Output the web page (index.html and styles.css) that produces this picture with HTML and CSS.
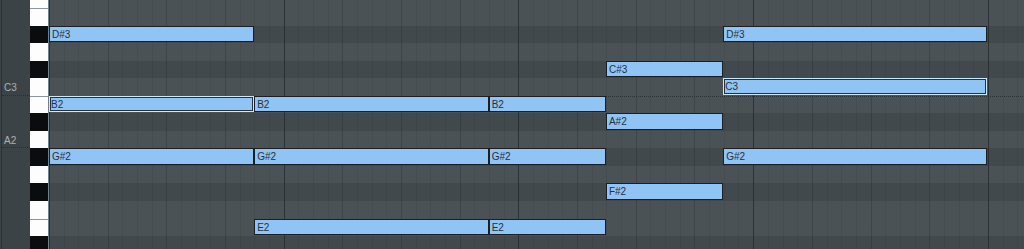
FILE: index.html
```html
<!DOCTYPE html>
<html lang="en">
<head>
    <meta charset="UTF-8">
    <meta name="viewport" content="width=device-width, initial-scale=1.0">
    <title>Piano Roll</title>
    <link rel="stylesheet" href="styles.css">
</head>
<body>
    <div class="editor">
        <div class="labels" id="labels"></div>
        <div class="keys" id="keys"></div>
        <div class="roll" id="roll"></div>
    </div>
    <script>
        // rows from the top of the view, F3 down to D#2
        let rows = ["F3", "E3", "D#3", "D3", "C#3", "C3", "B2", "A#2", "A2", "G#2", "G2", "F#2", "F2", "E2", "D#2"];

        // start / end in sixteenths
        let notes = [
            { name: "D#3", start: 0, end: 14 },
            { name: "D#3", start: 46, end: 64 },
            { name: "C#3", start: 38, end: 46 },
            { name: "C3", start: 46, end: 64, selected: true },
            { name: "B2", start: 0, end: 14, selected: true },
            { name: "B2", start: 14, end: 30 },
            { name: "B2", start: 30, end: 38 },
            { name: "A#2", start: 38, end: 46 },
            { name: "G#2", start: 0, end: 14 },
            { name: "G#2", start: 14, end: 30 },
            { name: "G#2", start: 30, end: 38 },
            { name: "G#2", start: 46, end: 64 },
            { name: "F#2", start: 38, end: 46 },
            { name: "E2", start: 14, end: 30 },
            { name: "E2", start: 30, end: 38 }
        ];

        let labels = document.getElementById("labels");
        let keys = document.getElementById("keys");
        let roll = document.getElementById("roll");

        rows.forEach((name, i) => {
            let black = name.includes("#");
            let pitch = name.replace(/\d/g, "");

            let label = document.createElement("div");
            label.classList.add("label");
            if (pitch == "C" || pitch == "A") {
                label.classList.add("marked");
                label.innerText = name;
            }
            labels.appendChild(label);

            let key = document.createElement("div");
            key.classList.add("key", black ? "black" : "white");
            if (pitch == "E" || pitch == "B") key.classList.add("edge");
            keys.appendChild(key);

            let row = document.createElement("div");
            row.classList.add("row", black ? "black" : "white");
            if (pitch == "B") row.classList.add("octave");
            row.style.gridRow = i + 1;
            roll.appendChild(row);
        });

        notes.forEach(n => {
            let note = document.createElement("div");
            note.classList.add("note");
            if (n.selected) note.classList.add("selected");
            note.innerText = n.name;
            note.style.gridRow = rows.indexOf(n.name) + 1;
            note.style.gridColumn = (n.start + 1) + " / " + (n.end + 1);
            roll.appendChild(note);
        });
    </script>
</body>
</html>
```

FILE: styles.css
```css
body {
    margin: 0;
    background: #3c4347;
    overflow: hidden;
}
.editor {
    display: flex;
    height: 249px;
    overflow: hidden;
    font-family: "Liberation Sans", Arial, sans-serif;
}
.labels, .keys, .roll {
    display: grid;
    grid-template-rows: repeat(15, 17.55px);
    align-content: start;
    margin-top: -9.6px;
}
.labels {
    width: 30px;
    flex: none;
    background: linear-gradient(to right, #3d4448 0 1px, #2b3134 1px 2px, #3c4347 2px);
}
.label {
    font-size: 10px;
    color: #a9b2b7;
    line-height: 19px;
}
.label.marked {
    border-bottom: 1px dotted #2a2f33;
    margin-left: 2px;
    padding-left: 2px;
}
.keys {
    width: 18px;
    flex: none;
    border-right: 1px solid #71818c;
}
.key.white {
    background: #fdfdfd;
}
.key.black {
    background: #0a0c0e;
}
.key.edge {
    border-top: 1px solid #8d949a;
}
.roll {
    flex: 1;
    grid-template-columns: repeat(67, 14.67px);
}
.row {
    grid-column: 1 / -1;
    background-image:
        repeating-linear-gradient(to right, rgba(30, 35, 38, 0.55) 0 1px, transparent 1px 234.72px),
        repeating-linear-gradient(to right, rgba(0, 0, 0, 0.1) 0 1px, transparent 1px 58.68px),
        repeating-linear-gradient(to right, rgba(0, 0, 0, 0.07) 0 1px, transparent 1px 14.67px);
}
.row.white {
    background-color: #4b5255;
}
.row.black {
    background-color: #42494c;
}
.row.octave {
    border-top: 1px dotted #2c3236;
}
.note {
    box-sizing: border-box;
    margin-bottom: 1px;
    min-width: 0;
    background: #90c4f4;
    border: 1px solid #1a1f23;
    color: #27313c;
    font-size: 10px;
    line-height: 15px;
    padding-left: 2px;
    white-space: nowrap;
    overflow: hidden;
}
.note.selected {
    border-color: #cfe8f7;
    box-shadow: inset 0 0 0 1px #29323a;
    padding-left: 1px;
}
```
